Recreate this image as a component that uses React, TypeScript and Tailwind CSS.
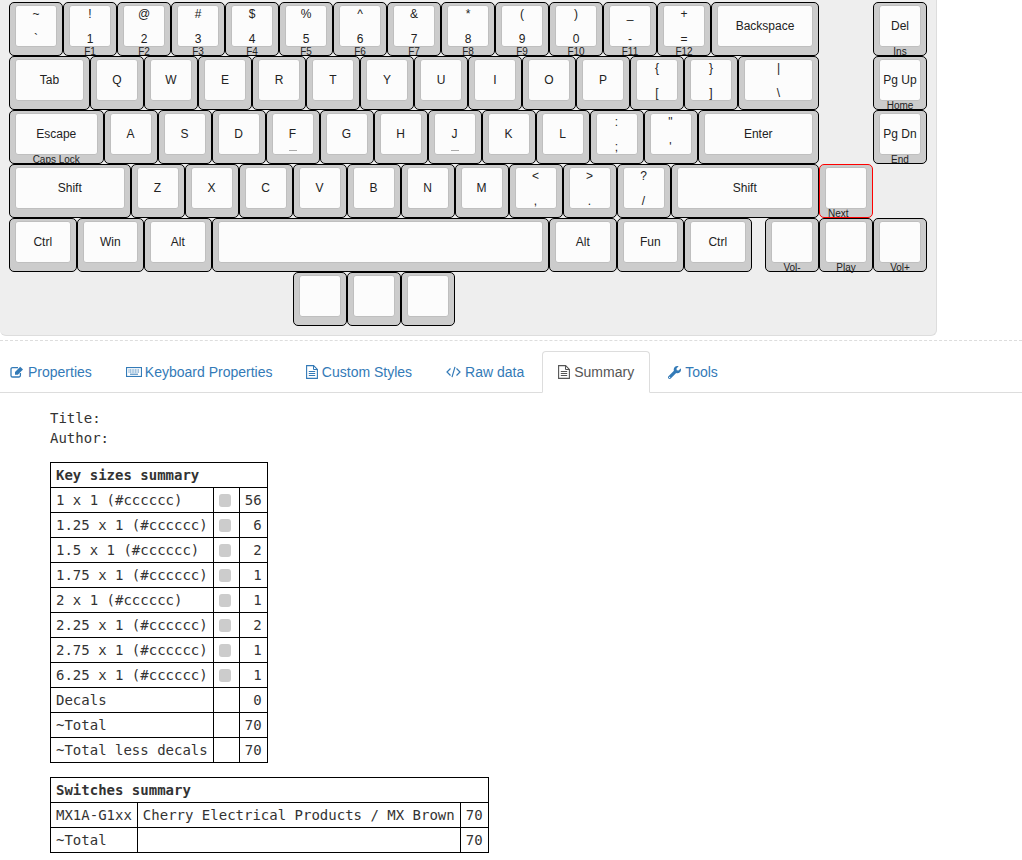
import { FaWrench } from 'react-icons/fa';

type KeyDef = {
  w?: string;
  top?: string;
  bottom?: string;
  label?: string;
  front?: string;
  homing?: boolean;
  selected?: boolean;
  frontLeft?: boolean;
};

// key width classes, 1u = 54px
const W1 = 'w-[54px]';
const W125 = 'w-[67.5px]';
const W15 = 'w-[81px]';
const W175 = 'w-[94.5px]';
const W2 = 'w-[108px]';
const W225 = 'w-[121.5px]';
const W275 = 'w-[148.5px]';
const W625 = 'w-[337.5px]';

const rows: { keys: KeyDef[]; right?: KeyDef[]; rightGap: string }[] = [
  {
    keys: [
      { top: '~', bottom: '`' },
      { top: '!', bottom: '1', front: 'F1' },
      { top: '@', bottom: '2', front: 'F2' },
      { top: '#', bottom: '3', front: 'F3' },
      { top: '$', bottom: '4', front: 'F4' },
      { top: '%', bottom: '5', front: 'F5' },
      { top: '^', bottom: '6', front: 'F6' },
      { top: '&', bottom: '7', front: 'F7' },
      { top: '*', bottom: '8', front: 'F8' },
      { top: '(', bottom: '9', front: 'F9' },
      { top: ')', bottom: '0', front: 'F10' },
      { top: '_', bottom: '-', front: 'F11' },
      { top: '+', bottom: '=', front: 'F12' },
      { label: 'Backspace', w: W2 },
    ],
    right: [{ label: 'Del', front: 'Ins' }],
    rightGap: 'ml-[54px]',
  },
  {
    keys: [
      { label: 'Tab', w: W15 },
      { label: 'Q' },
      { label: 'W' },
      { label: 'E' },
      { label: 'R' },
      { label: 'T' },
      { label: 'Y' },
      { label: 'U' },
      { label: 'I' },
      { label: 'O' },
      { label: 'P' },
      { top: '{', bottom: '[' },
      { top: '}', bottom: ']' },
      { top: '|', bottom: '\\', w: W15 },
    ],
    right: [{ label: 'Pg Up', front: 'Home' }],
    rightGap: 'ml-[54px]',
  },
  {
    keys: [
      { label: 'Escape', w: W175, front: 'Caps Lock' },
      { label: 'A' },
      { label: 'S' },
      { label: 'D' },
      { label: 'F', homing: true },
      { label: 'G' },
      { label: 'H' },
      { label: 'J', homing: true },
      { label: 'K' },
      { label: 'L' },
      { top: ':', bottom: ';' },
      { top: '"', bottom: "'" },
      { label: 'Enter', w: W225 },
    ],
    right: [{ label: 'Pg Dn', front: 'End' }],
    rightGap: 'ml-[54px]',
  },
  {
    keys: [
      { label: 'Shift', w: W225 },
      { label: 'Z' },
      { label: 'X' },
      { label: 'C' },
      { label: 'V' },
      { label: 'B' },
      { label: 'N' },
      { label: 'M' },
      { top: '<', bottom: ',' },
      { top: '>', bottom: '.' },
      { top: '?', bottom: '/' },
      { label: 'Shift', w: W275 },
      { front: 'Next', selected: true, frontLeft: true },
    ],
    rightGap: '',
  },
  {
    keys: [
      { label: 'Ctrl', w: W125 },
      { label: 'Win', w: W125 },
      { label: 'Alt', w: W125 },
      { w: W625 },
      { label: 'Alt', w: W125 },
      { label: 'Fun', w: W125 },
      { label: 'Ctrl', w: W125 },
    ],
    right: [{ front: 'Vol-' }, { front: 'Play' }, { front: 'Vol+' }],
    rightGap: 'ml-[13.5px]',
  },
];

const Key = ({ w = W1, top, bottom, label, front, homing, selected, frontLeft }: KeyDef) => (
  <div
    className={`relative h-[54px] shrink-0 rounded-[5px] border bg-[#cccccc] px-[5px] pt-[2px] ${w} ${
      selected ? 'z-10 border-[#ff0000]' : 'border-black'
    }`}
  >
    <div className="relative flex h-[42px] flex-col items-center justify-center rounded-[3px] border border-[#bfbfbf] bg-[#fcfcfc] text-[12px] leading-[14px] text-[#222]">
      {label && <span>{label}</span>}
      {top !== undefined && (
        <div className="flex h-full w-full flex-col items-center justify-between pt-[1px]">
          <span>{top}</span>
          <span>{bottom}</span>
        </div>
      )}
      {homing && <div className="absolute bottom-[3px] h-px w-[8px] bg-[#aaaaaa]" />}
    </div>
    {front && (
      <div
        className={`absolute bottom-[-3px] text-[10px] leading-[12px] text-[#222] ${
          frontLeft ? 'left-[8px]' : 'left-0 right-0 text-center'
        }`}
      >
        {front}
      </div>
    )}
  </div>
);

const EditIcon = () => (
  <svg width="14" height="12" viewBox="0 0 14 12" fill="none" className="shrink-0">
    <path
      d="M8 1.6H2.6A1.6 1.6 0 0 0 1 3.2v6.2A1.6 1.6 0 0 0 2.6 11h6.2a1.6 1.6 0 0 0 1.6-1.6V7"
      stroke="currentColor"
      strokeWidth="1.3"
    />
    <path d="M5 6 10.2.8 13 3.6 7.8 8.8H5z" fill="currentColor" />
  </svg>
);

const KeyboardIcon = () => (
  <svg width="16" height="10" viewBox="0 0 16 10" fill="none" className="shrink-0">
    <rect x="0.5" y="0.5" width="15" height="9" stroke="currentColor" strokeWidth="1.2" />
    <path d="M2.5 3h11M2.5 5h11" stroke="currentColor" strokeDasharray="1 0.6" />
    <path d="M4 7.2h8" stroke="currentColor" />
  </svg>
);

const FileIcon = () => (
  <svg width="12" height="14" viewBox="0 0 12 14" fill="none" className="shrink-0">
    <path d="M.6.6h7L11.4 4.4v9H.6z" stroke="currentColor" strokeWidth="1.1" />
    <path d="M7.5.6v3.9h3.9" stroke="currentColor" />
    <path d="M2.8 6.5h6.4M2.8 8.5h6.4M2.8 10.5h6.4" stroke="currentColor" />
  </svg>
);

const CodeIcon = () => (
  <svg width="15" height="12" viewBox="0 0 15 12" fill="none" className="shrink-0">
    <path
      d="M4.5 2.5 1 6l3.5 3.5M10.5 2.5 14 6l-3.5 3.5M9 .8 6 11.2"
      stroke="currentColor"
      strokeWidth="1.2"
    />
  </svg>
);

const tabs = [
  { name: 'Properties', icon: <EditIcon />, gap: 'gap-1' },
  { name: 'Keyboard Properties', icon: <KeyboardIcon />, gap: 'gap-[3px]' },
  { name: 'Custom Styles', icon: <FileIcon />, gap: 'gap-[3.4px]' },
  { name: 'Raw data', icon: <CodeIcon />, gap: 'gap-1' },
  { name: 'Summary', icon: <FileIcon />, gap: 'gap-1', active: true },
  { name: 'Tools', icon: <FaWrench size={13} className="shrink-0" />, gap: 'gap-1' },
];

const sizes = [
  ['1 x 1 (#cccccc)', '56'],
  ['1.25 x 1 (#cccccc)', '6'],
  ['1.5 x 1 (#cccccc)', '2'],
  ['1.75 x 1 (#cccccc)', '1'],
  ['2 x 1 (#cccccc)', '1'],
  ['2.25 x 1 (#cccccc)', '2'],
  ['2.75 x 1 (#cccccc)', '1'],
  ['6.25 x 1 (#cccccc)', '1'],
];

const cell = 'border border-black px-[5px] py-[2px]';

export default function App() {
  return (
    <div className="h-[860px] overflow-hidden bg-white font-['Liberation_Sans',sans-serif] text-[14px] leading-[20px] text-[#333]">
      <div className="h-[336px] w-[937px] rounded-br-[6px] rounded-bl-[6px] border-r border-b border-[#dddddd] bg-[#eeeeee] pt-[2px] pl-[9px]">
        {rows.map((row, i) => (
          <div key={i} className="flex">
            {row.keys.map((k, j) => (
              <Key key={j} {...k} />
            ))}
            {row.right && (
              <div className={`flex ${row.rightGap}`}>
                {row.right.map((k, j) => (
                  <Key key={j} {...k} />
                ))}
              </div>
            )}
          </div>
        ))}
        <div className="ml-[283.5px] flex">
          <Key />
          <Key />
          <Key />
        </div>
      </div>

      <div className="mt-[4px] border-t border-dashed border-[#dddddd] pt-[10px]">
        <ul className="ml-[-6px] flex h-[42px] gap-[2px] border-b border-[#dddddd]">
          {tabs.map((t) => (
            <li
              key={t.name}
              className={`flex h-[42px] items-center rounded-t-[4px] border px-[15px] ${t.gap} ${
                t.active
                  ? 'border-[#dddddd] border-b-white text-[#555555]'
                  : 'border-transparent text-[#337ab7]'
              }`}
            >
              {t.icon}
              <span>{t.name}</span>
            </li>
          ))}
        </ul>
      </div>

      <div className="pt-[15px] pl-[50px] font-['DejaVu_Sans_Mono',monospace]">
        <div>Title:</div>
        <div>Author:</div>

        <table className="mt-[14px] border-collapse">
          <tbody>
            <tr>
              <td colSpan={3} className={`${cell} font-bold`}>
                Key sizes summary
              </td>
            </tr>
            {sizes.map(([name, count]) => (
              <tr key={name}>
                <td className={cell}>{name}</td>
                <td className={`${cell} w-[26px]`}>
                  <div className="h-[13px] w-[12px] rounded-[3px] bg-[#cccccc]" />
                </td>
                <td className={`${cell} text-right`}>{count}</td>
              </tr>
            ))}
            <tr>
              <td className={cell}>Decals</td>
              <td className={cell}></td>
              <td className={`${cell} text-right`}>0</td>
            </tr>
            <tr>
              <td className={cell}>~Total</td>
              <td className={cell}></td>
              <td className={`${cell} text-right`}>70</td>
            </tr>
            <tr>
              <td className={cell}>~Total less decals</td>
              <td className={cell}></td>
              <td className={`${cell} text-right`}>70</td>
            </tr>
          </tbody>
        </table>

        <table className="mt-[14px] border-collapse">
          <tbody>
            <tr>
              <td colSpan={3} className={`${cell} font-bold`}>
                Switches summary
              </td>
            </tr>
            <tr>
              <td className={cell}>MX1A-G1xx</td>
              <td className={cell}>Cherry Electrical Products / MX Brown</td>
              <td className={`${cell} text-right`}>70</td>
            </tr>
            <tr>
              <td className={cell}>~Total</td>
              <td className={cell}></td>
              <td className={`${cell} text-right`}>70</td>
            </tr>
          </tbody>
        </table>
      </div>
    </div>
  );
}
